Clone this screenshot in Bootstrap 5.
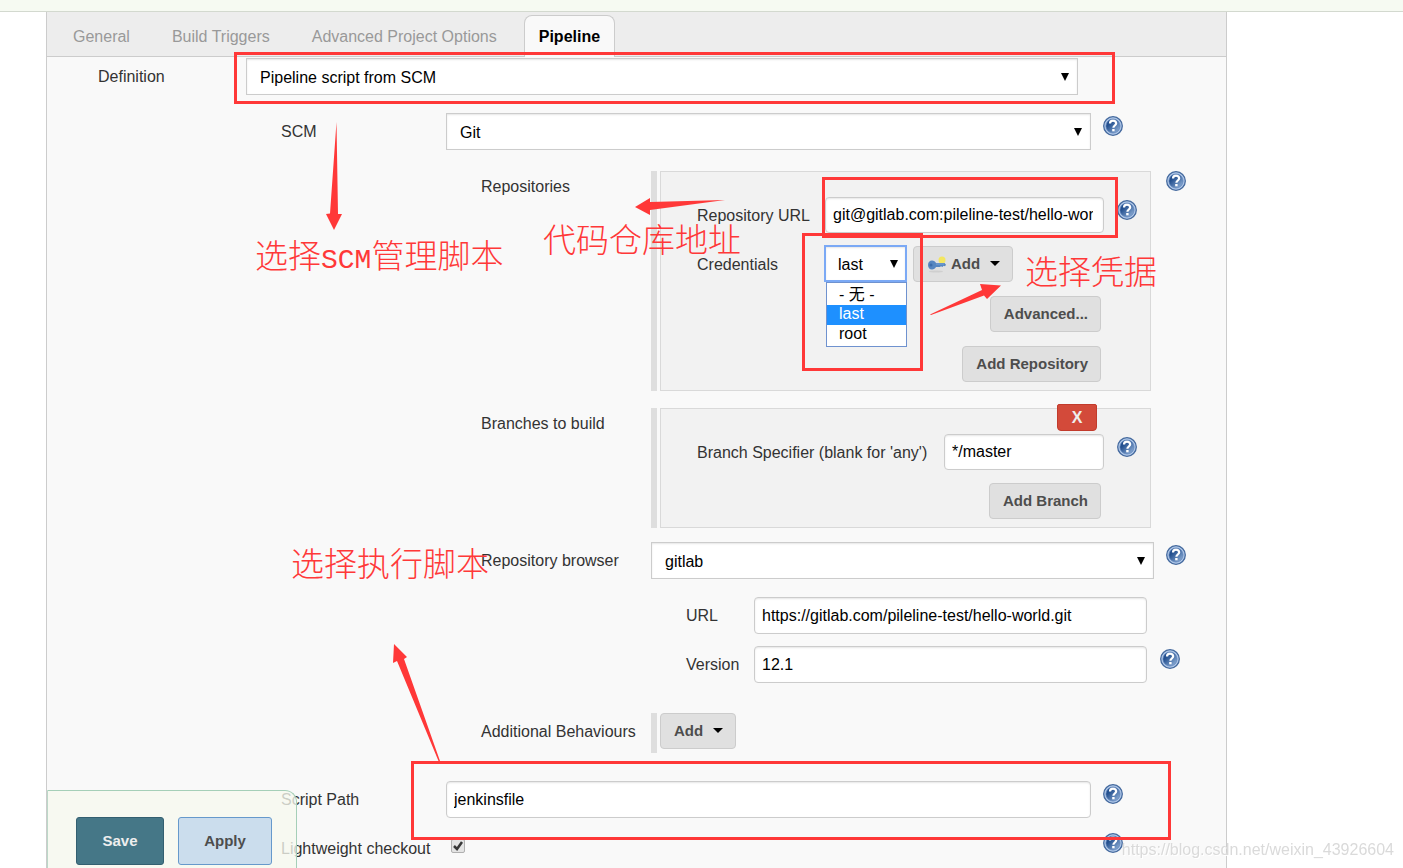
<!DOCTYPE html>
<html lang="en">
<head>
<meta charset="utf-8">
<meta name="viewport" content="width=device-width, initial-scale=1">
<title>Pipeline configuration</title>
<link href="https://cdn.jsdelivr.net/npm/bootstrap@5.3.0/dist/css/bootstrap.min.css" rel="stylesheet">
<style>
  :root { --line: #ccc; --note: #ff3838; }
  body { font-family: "Liberation Sans", "Noto Sans CJK SC", sans-serif; font-size: 16px; line-height: 24px; color: #333; background: #fff; }
  .crumb-bar { height: 12px; background: #f6faf2; border-bottom: 1px solid #d3d9cf; }
  .config { margin: 0 176px 0 46px; background: #f9f9f9; border: solid var(--line); border-width: 0 1px; }

  .config-tabs { height: 45px; padding: 3px 11px 0; gap: 12px; background: #ededed; border-bottom: 1px solid var(--line); }
  .config-tabs .nav-link { height: 42px; padding: 9px 14px 7px; border: 1px solid transparent; border-bottom: 0; border-radius: 8px 8px 0 0; color: #999; line-height: 24px; }
  .config-tabs .nav-link.active { background: #f9f9f9; border-color: var(--line); color: #000; font-weight: bold; }

  .level-1 { padding: 1px 148px 0 51px; }
  .level-2 { padding: 0 103px 0 234px; }
  .level-3 { padding: 0 40px 0 434px; }
  .level-4 { padding: 0 46px 0 639px; }
  .row-label { flex: none; padding-top: 7px; white-space: nowrap; }
  .level-1 .row-label { width: 148px; }
  .level-2 .row-label { width: 165px; }
  .level-3 > .row-label { width: 170px; }
  .level-4 .row-label { width: 68px; }
  .block-label.row-label { padding-top: 4px; }

  .text-field, .pick-field { width: 100%; height: 37px; border: 1px solid var(--line); background-color: #fff; color: #000; box-shadow: inset 0 1px 2px rgba(0,0,0,.1); }
  .text-field { padding: 0 10px 0 7px; border-radius: 4px; }
  .pick-field { appearance: none; padding: 2px 13px 0; border-radius: 0; background-image: url("data:image/svg+xml,%3Csvg xmlns='http://www.w3.org/2000/svg' width='8' height='8'%3E%3Cpath d='M0 0h8L4 8z'/%3E%3C/svg%3E"); background-repeat: no-repeat; background-position: right 8px top 14px; }
  .help { flex: none; width: 20px; height: 20px; margin: 3px 0 0 12px; padding: 0; border: 0; background: none; line-height: 0; }
  .help svg { width: 20px; height: 20px; display: block; }
  .chunk-box .help, .level-4 .help { margin-left: 13px; }

  .chunk { border-left: 6px solid #dedede; padding-left: 3px; }
  .chunk-wide { margin-right: 3px; }
  .chunk-box { padding: 25px 13px 8px 36px; background: #f2f2f2; border: 1px solid #d9d9d9; }
  .chunk-box .row-label { width: 128px; }
  .chunk-box .row-label.long-label { width: 247px; }
  .chunk-box .row-label.cred-label { width: 127px; padding-top: 8px; }
  .chunk-box .text-field { height: 36px; }
  .chunk-actions { padding-right: 36px; gap: 14px; }

  .btn-config { height: 36px; padding: 0 12px 0 13px; border: 1px solid var(--line); border-radius: 4px; background: #e0e0e0; color: #4d4d4d; font: bold 15px/32px "Liberation Sans", sans-serif; }
  .btn-config .caret { width: 10px; height: 5px; margin: 0 0 1px 10px; fill: #000; }
  .btn-remove { top: -5px; right: 53px; width: 40px; height: 27px; padding: 0; background: #d34a3a; border: 1px solid #c23b2c; border-radius: 2px 2px 4px 4px; color: #eee; font: bold 16px/24px "Liberation Sans", sans-serif; }
  .cred { width: 83px; margin-right: 6px; }
  .cred .pick-field { padding: 3px 12px 0; border: 2px solid #7ba9f5; background-position: right 7px top 13px; }
  .cred-list { top: 37px; left: 2px; right: 0; padding: 2px 0 1px; border: 1px solid #6f92cf; background: #fff; color: #000; z-index: 2; line-height: 20px; }
  .cred-list li { height: 20px; padding-left: 12px; white-space: nowrap; }
  .cred-list li[aria-selected=true] { background: #1e90ff; color: #fff; line-height: 17px; }
  .cred-list li:last-child { line-height: 18px; }

  .tick { appearance: none; width: 14px; height: 14px; margin: 9px 0 0 5px; border: 1px solid #b0b0b0; border-radius: 2px; background: #e4e4e4 url("data:image/svg+xml,%3Csvg xmlns='http://www.w3.org/2000/svg' width='12' height='12'%3E%3Cpath d='M2 6l3 3 5-7' fill='none' stroke='%23383838' stroke-width='2.5'/%3E%3C/svg%3E") center no-repeat; }

  .save-bar { left: 47px; bottom: 0; padding: 26px 24px 3px 28px; gap: 14px; background: rgba(246,249,238,.78); border: 1px solid #a5cfb8; border-bottom: 0; border-left-color: #bcd8c8; border-radius: 0 12px 0 0; z-index: 5; }
  .save-bar .btn { width: 88px; height: 48px; padding: 0; border-radius: 3px; font: bold 15px/46px "Liberation Sans", sans-serif; }
  .save-bar .btn-save { color: #eee; background: #457787; border: 1px solid #335f70; }
  .save-bar .btn-apply { width: 94px; color: #4d4d4d; background: #cbdded; border: 1px solid #6699cc; }

  /* Reviewer's marks, laid over the form */
  .mark-up { position: absolute; pointer-events: none; z-index: 3; }
  .mark-box { border: 3px solid var(--note); }
  .mark-text { color: var(--note); font: 300 33px/40px "Noto Sans CJK SC", sans-serif; white-space: nowrap; }
  .mark-text .latin { font: 28px/40px "Liberation Mono", monospace; }
  .mark-arrow { fill: var(--note); }
  .box-definition { inset: -6px -37px -9px -12px; }
  .box-url { inset: -20px -14px -5px -3px; }
  .box-cred { left: -22px; top: -12px; width: 121px; height: 138px; }
  .box-script { inset: -20px -80px -22px -35px; }
  .arrow-scm { left: 279px; top: 65px; }
  .text-scm { left: 208px; top: 177px; }
  .arrow-url { left: 588px; top: 141px; }
  .text-url { left: 496px; top: 161px; }
  .arrow-cred { left: 106px; top: 39px; }
  .text-cred { left: 201px; top: 5px; }
  .text-path { left: 244px; top: 485px; }
  .arrow-path { left: 346px; top: 587px; }
  .watermark { right: 9px; bottom: 6px; color: #dadada; text-shadow: 1px 1px 0 #fff; z-index: 6; }
</style>
</head>
<body>
<svg class="position-absolute" width="0" height="0" aria-hidden="true">
  <defs>
    <linearGradient id="helpFill" x1="0" y1="0" x2="1" y2="1"><stop offset="0.3" stop-color="#24508f"/><stop offset="1" stop-color="#9dbbe0"/></linearGradient>
    <symbol id="help" viewBox="0 0 20 20">
      <circle cx="10" cy="10" r="9.3" fill="#b4cbea" stroke="#44699e" stroke-width="1.3"/>
      <circle cx="10" cy="10" r="7.1" fill="url(#helpFill)" stroke="#5d83ba" stroke-width=".7"/>
      <path d="M7 7.6C7 5.5 8.3 4.7 10 4.7c1.9 0 3.2 1 3.2 2.6 0 2.2-2.8 2.2-2.8 4.5" fill="none" stroke="#fff" stroke-width="2.2"/>
      <rect x="9.2" y="13" width="2.4" height="2.3" fill="#fff"/>
    </symbol>
    <symbol id="caret" viewBox="0 0 10 5"><path d="M0 0h10L5 5z"/></symbol>
  </defs>
</svg>

<div class="min-vh-100 d-flex flex-column">
  <header class="crumb-bar flex-shrink-0"></header>
  <main class="config flex-grow-1">
    <nav class="config-tabs nav flex-nowrap">
      <a class="nav-link" href="#general">General</a>
      <a class="nav-link" href="#triggers">Build Triggers</a>
      <a class="nav-link" href="#options">Advanced Project Options</a>
      <a class="nav-link active" href="#pipeline" aria-current="page">Pipeline</a>
    </nav>

    <form class="position-relative" id="pipeline">
      <div class="level-1 d-flex">
        <label class="row-label" for="definition">Definition</label>
        <div class="position-relative flex-grow-1">
          <select class="pick-field d-block" id="definition"><option>Pipeline script from SCM</option></select>
          <div class="mark-up mark-box box-definition"></div>
        </div>
      </div>

      <div class="level-2 d-flex" style="margin-top:18px">
        <label class="row-label" for="scm">SCM</label>
        <select class="pick-field flex-grow-1" id="scm"><option>Git</option></select>
        <button type="button" class="help" aria-label="Help"><svg><use href="#help"/></svg></button>
      </div>

      <div class="level-3 d-flex" style="margin-top:21px">
        <span class="row-label block-label">Repositories</span>
        <div class="chunk chunk-wide flex-grow-1">
          <div class="chunk-box">
            <div class="d-flex">
              <label class="row-label" for="repo">Repository URL</label>
              <div class="position-relative flex-grow-1">
                <input class="text-field d-block" id="repo" type="text" value="git@gitlab.com:pileline-test/hello-world.git">
                <div class="mark-up mark-box box-url"></div>
              </div>
              <button type="button" class="help" aria-label="Help"><svg><use href="#help"/></svg></button>
            </div>
            <div class="d-flex position-relative" style="margin-top:12px">
              <label class="row-label cred-label" for="cred">Credentials</label>
              <div class="cred position-relative">
                <select class="pick-field d-block" id="cred"><option>last</option></select>
                <ul class="cred-list position-absolute list-unstyled m-0" role="listbox" aria-label="Credentials">
                  <li role="option">- 无 -</li>
                  <li role="option" aria-selected="true">last</li>
                  <li role="option">root</li>
                </ul>
                <div class="mark-up mark-box box-cred"></div>
                <svg class="mark-up mark-arrow arrow-cred" width="72" height="32"><path d="M0 30.5L52 6 50 0 71 1.5 57 15 54 11.5 1 31z"/></svg>
                <div class="mark-up mark-text text-cred">选择凭据</div>
              </div>
              <button type="button" class="btn btn-config d-flex align-items-center" style="margin-top:1px">
                <svg width="20" height="18" viewBox="0 0 20 18" class="me-1">
                  <ellipse cx="9" cy="16.500" rx="7" ry="1" fill="#cfcfcf"/>
                  <circle cx="15" cy="5" r="3.5" fill="#f3e660"/>
                  <path d="M1 10C1 7 2.800 5.500 5 5.500c2 0 3.300 1 4 2.500h8.500l1.500 1.800-1 1.400-1.500-.4-1 1.300-1.500-.9-1 .9H9C8.200 13.500 7 14.500 5 14.500c-2.500 0-4-1.800-4-4.500z" fill="#5686c1"/>
                  <circle cx="4" cy="10" r="1.5" fill="#3c6cab"/><path d="M9 9h8" stroke="#7ba3d3" stroke-width="1"/>
                </svg>Add<svg class="caret"><use href="#caret"/></svg>
              </button>
            </div>
            <div class="chunk-actions d-flex flex-column align-items-end" style="margin-top:14px">
              <button type="button" class="btn btn-config">Advanced...</button>
              <button type="button" class="btn btn-config">Add Repository</button>
            </div>
          </div>
        </div>
        <button type="button" class="help mt-0" aria-label="Help"><svg><use href="#help"/></svg></button>
      </div>

      <div class="level-3 d-flex" style="margin-top:17px">
        <span class="row-label block-label">Branches to build</span>
        <div class="chunk chunk-wide flex-grow-1">
          <div class="chunk-box position-relative">
            <button type="button" class="btn btn-remove position-absolute">X</button>
            <div class="d-flex">
              <label class="row-label long-label" for="branch">Branch Specifier (blank for 'any')</label>
              <input class="text-field" id="branch" type="text" value="*/master">
              <button type="button" class="help" aria-label="Help"><svg><use href="#help"/></svg></button>
            </div>
            <div class="chunk-actions d-flex justify-content-end" style="margin-top:13px">
              <button type="button" class="btn btn-config">Add Branch</button>
            </div>
          </div>
        </div>
        <span class="help" aria-hidden="true"></span>
      </div>

      <div class="level-3 d-flex" style="margin-top:14px">
        <label class="row-label" for="browser">Repository browser</label>
        <select class="pick-field flex-grow-1" id="browser"><option>gitlab</option></select>
        <button type="button" class="help" aria-label="Help"><svg><use href="#help"/></svg></button>
      </div>

      <div class="level-4 d-flex" style="margin-top:18px">
        <label class="row-label" for="url">URL</label>
        <input class="text-field" id="url" type="text" value="https://gitlab.com/pileline-test/hello-world.git">
        <span class="help" aria-hidden="true"></span>
      </div>
      <div class="level-4 d-flex" style="margin-top:12px">
        <label class="row-label" for="version">Version</label>
        <input class="text-field" id="version" type="text" value="12.1">
        <button type="button" class="help" aria-label="Help"><svg><use href="#help"/></svg></button>
      </div>

      <div class="level-3 d-flex" style="margin-top:30px">
        <span class="row-label">Additional Behaviours</span>
        <div class="chunk pb-1">
          <button type="button" class="btn btn-config d-flex align-items-center">Add<svg class="caret"><use href="#caret"/></svg></button>
        </div>
      </div>

      <div class="level-2 d-flex" style="margin-top:28px">
        <label class="row-label" for="script">Script Path</label>
        <div class="position-relative flex-grow-1">
          <input class="text-field d-block" id="script" type="text" value="jenkinsfile">
          <div class="mark-up mark-box box-script"></div>
        </div>
        <button type="button" class="help" aria-label="Help"><svg><use href="#help"/></svg></button>
      </div>
      <div class="level-2 d-flex" style="margin-top:12px">
        <label class="row-label" for="light">Lightweight checkout</label>
        <input class="tick" id="light" type="checkbox" checked>
        <button type="button" class="help ms-auto" aria-label="Help"><svg><use href="#help"/></svg></button>
      </div>

      <svg class="mark-up mark-arrow arrow-scm" width="16" height="108"><path d="M10.5 0L12 92h4L8 108 0 92l4-.5z"/></svg>
      <div class="mark-up mark-text text-scm">选择<span class="latin">SCM</span>管理脚本</div>
      <svg class="mark-up mark-arrow arrow-url" width="90" height="18"><path d="M0 9L15 0v4L90 2 15 12v5z"/></svg>
      <div class="mark-up mark-text text-url">代码仓库地址</div>
      <div class="mark-up mark-text text-path">选择执行脚本</div>
      <svg class="mark-up mark-arrow arrow-path" width="48" height="118"><path d="M1 0L14 13 11 15 47 117 45.5 117 4 17 0 19z"/></svg>
    </form>
  </main>
</div>

<div class="save-bar position-fixed d-flex">
  <button type="submit" form="pipeline" class="btn btn-save">Save</button>
  <button type="button" class="btn btn-apply">Apply</button>
</div>
<div class="watermark position-fixed">https://blog.csdn.net/weixin_43926604</div>
<script src="https://cdn.jsdelivr.net/npm/bootstrap@5.3.0/dist/js/bootstrap.bundle.min.js"></script>
</body>
</html>
